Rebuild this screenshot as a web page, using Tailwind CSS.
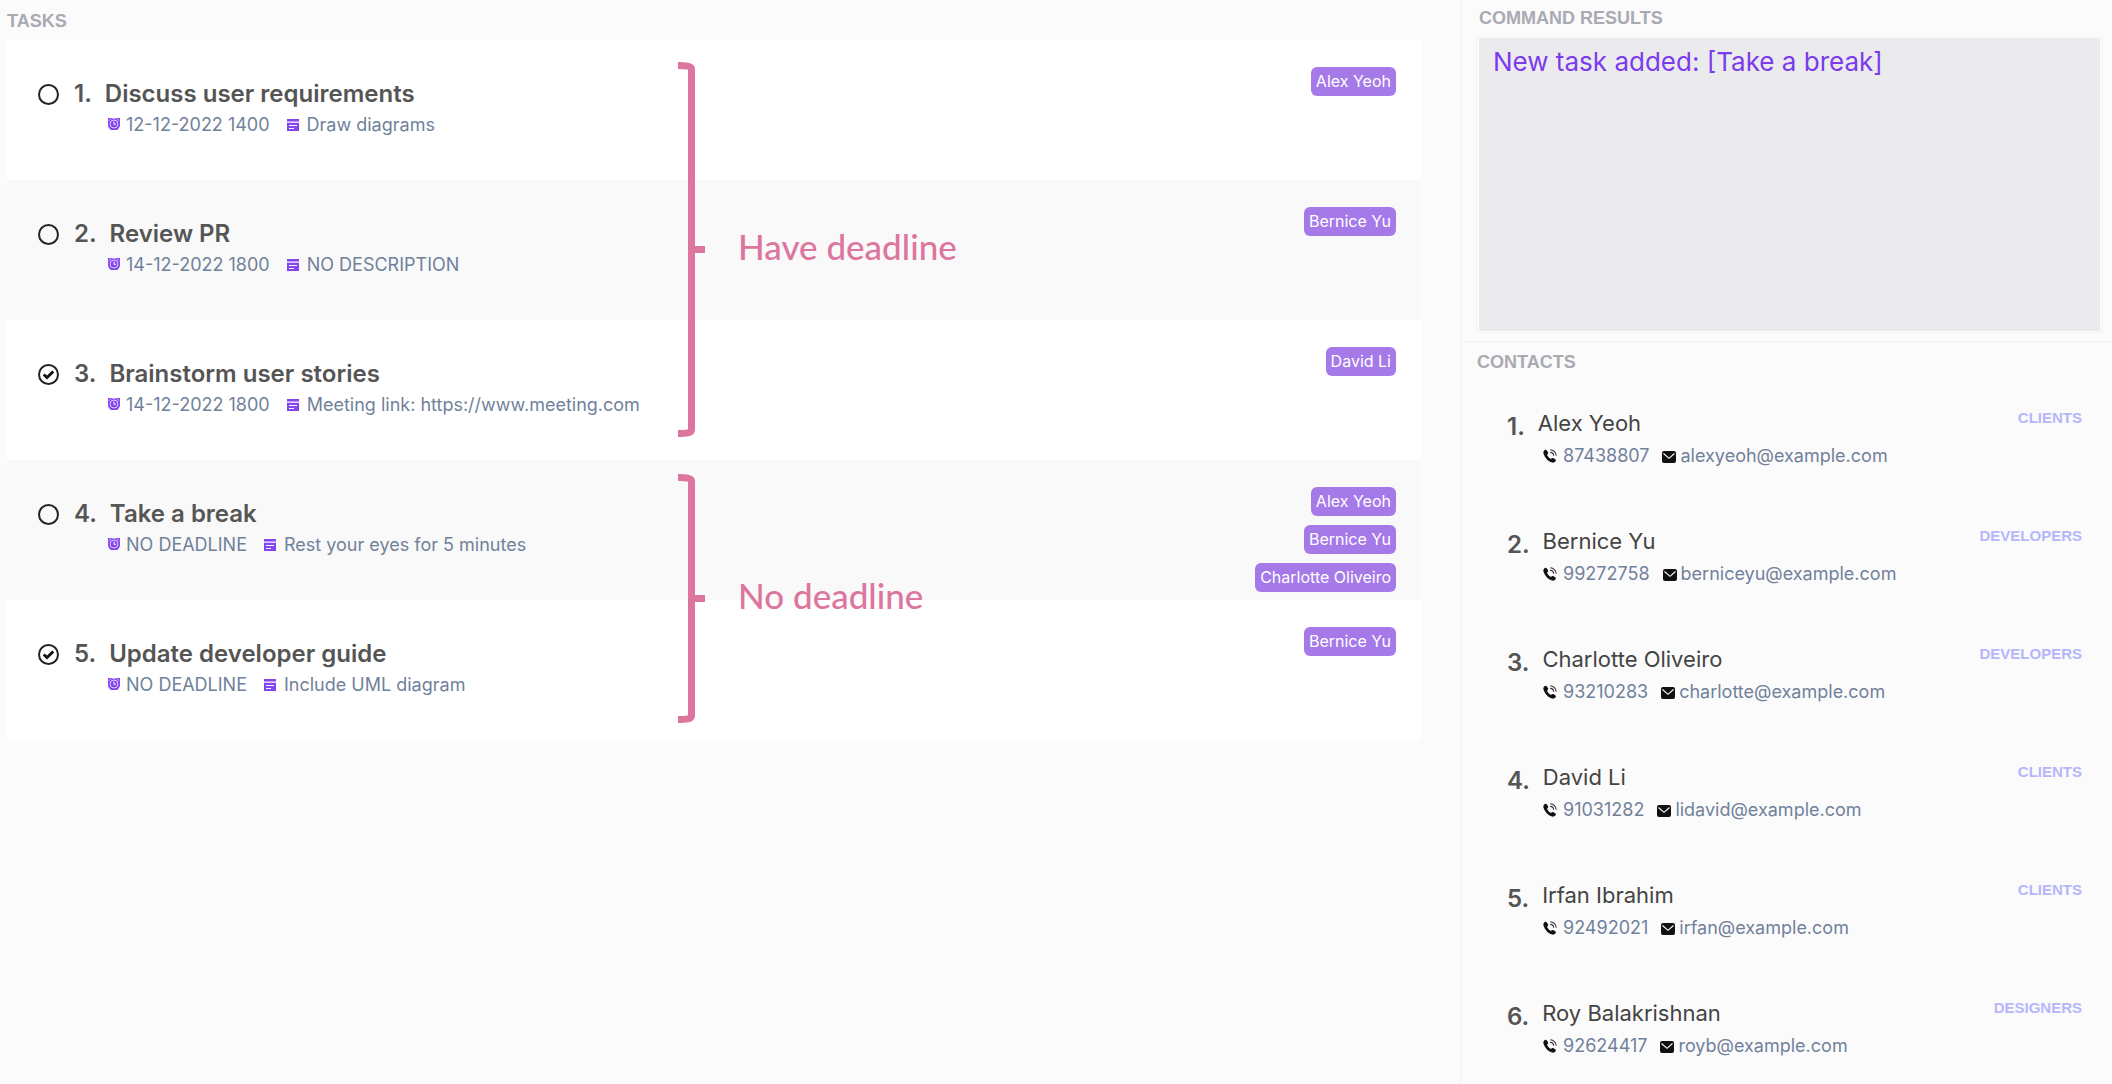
<!DOCTYPE html>
<html lang="en">
<head>
<meta charset="utf-8">
<title>Tasks and contacts</title>
<script src="https://cdn.jsdelivr.net/npm/@tailwindcss/browser@4"></script>
</head>
<body class="bg-[#fbfbfb] font-['Inter',sans-serif]">
<svg class="hidden" aria-hidden="true">
  <symbol id="clock" viewBox="0 0 12 12">
    <path d="M0 0h3l1 .6h4L9 0h3v7A6 5.500 0 0 1 0 7z" fill="#8445f0"/>
    <circle cx="6" cy="6" r="4" fill="none" stroke="#e6dafd" stroke-width=".9"/>
    <path d="M6 3.600v2.700h2.100" fill="none" stroke="#fff" stroke-width="1"/>
    <path d="M.7 2.800l2.200-2M11.300 2.800L9.100.8" stroke="#e6dafd" stroke-width=".8"/>
  </symbol>
  <symbol id="note" viewBox="0 0 12 12">
    <path d="M0 0h12v2.500H0zM0 3.700h12V12H0z" fill="#8445f0"/>
    <path d="M2 6.500h8M2 9.500h5" stroke="#fff" stroke-width="1.200"/>
  </symbol>
  <symbol id="phone" viewBox="0 0 14 14">
    <path d="M1.200 1.400C2.200.5 3.300.6 3.900 1.500l1 1.600c.5.8.3 1.500-.4 2.100-.5.5-.4.9 0 1.600.7 1.100 1.500 2 2.500 2.700.6.4 1 .5 1.500 0 .6-.7 1.300-.8 2.100-.3l1.600 1.100c.8.6.9 1.500.2 2.300-1 1.100-2.400 1.400-4.200.7C4.600 11.900 1.900 8.900.7 5.300.2 3.700.2 2.400 1.200 1.400z" fill="#111"/>
    <path d="M7.200.8c3.300 0 6 2.600 6 6M7.200 3.400c1.900 0 3.400 1.500 3.400 3.400" fill="none" stroke="#333" stroke-width="1.100"/>
  </symbol>
  <symbol id="mail" viewBox="0 0 14 12">
    <rect width="14" height="12" rx="2" fill="#111"/>
    <path d="M1.500 2.500L7 7.300l5.500-4.800" fill="none" stroke="#fff" stroke-width="1.100"/>
  </symbol>
  <symbol id="tick" viewBox="0 0 22 22">
    <path d="M6 11l3.400 3.200L16 7.800" fill="none" stroke="#111" stroke-width="3"/>
  </symbol>
</svg>

<main class="grid h-screen grid-cols-[1462fr_650fr] overflow-hidden">
  <section class="border-r-2 border-[#f5f5f7] pt-2 pr-[38px] pl-[7px]">
    <h2 class="h-8 font-['Liberation_Sans',sans-serif] text-lg leading-[26px] font-bold text-[#aaaab2]">TASKS</h2>
    <div class="relative">
      <ol>
        <li class="flex h-[140px] items-start justify-between bg-white pr-[26px] pl-[31px]">
          <div class="pt-[38px]">
            <div class="flex h-8 items-center text-2xl font-semibold text-[#555]">
              <input id="t1" type="checkbox" class="mr-[15px] size-[21px] appearance-none rounded-full border-2 border-[#222]">
              <label for="t1" class="flex gap-[13px]"><span>1.</span><span>Discuss user requirements</span></label>
            </div>
            <div class="flex h-[30px] items-center pl-[70px] text-lg text-[#71819b]">
              <svg class="mr-[6px] mb-[2px] size-3"><use href="#clock"/></svg><span>12-12-2022 1400</span>
              <svg class="mr-2 ml-[17px] size-3"><use href="#note"/></svg><span>Draw diagrams</span>
            </div>
          </div>
          <div class="flex flex-col items-end gap-[9px] pt-[27px] text-base leading-[29px] text-white">
            <span class="rounded-md bg-[#a57ae8] px-[5px]">Alex Yeoh</span>
          </div>
        </li>
        <li class="flex h-[140px] items-start justify-between bg-[#f9f9f9] pr-[26px] pl-[31px]">
          <div class="pt-[38px]">
            <div class="flex h-8 items-center text-2xl font-semibold text-[#555]">
              <input id="t2" type="checkbox" class="mr-[15px] size-[21px] appearance-none rounded-full border-2 border-[#222]">
              <label for="t2" class="flex gap-[13px]"><span>2.</span><span>Review PR</span></label>
            </div>
            <div class="flex h-[30px] items-center pl-[70px] text-lg text-[#71819b]">
              <svg class="mr-[6px] mb-[2px] size-3"><use href="#clock"/></svg><span>14-12-2022 1800</span>
              <svg class="mr-2 ml-[17px] size-3"><use href="#note"/></svg><span>NO DESCRIPTION</span>
            </div>
          </div>
          <div class="flex flex-col items-end gap-[9px] pt-[27px] text-base leading-[29px] text-white">
            <span class="rounded-md bg-[#a57ae8] px-[5px]">Bernice Yu</span>
          </div>
        </li>
        <li class="flex h-[140px] items-start justify-between bg-white pr-[26px] pl-[31px]">
          <div class="pt-[38px]">
            <div class="flex h-8 items-center text-2xl font-semibold text-[#555]">
              <span class="mr-[15px] grid size-[21px]">
                <input id="t3" type="checkbox" checked class="col-start-1 row-start-1 appearance-none rounded-full border-2 border-[#222]">
                <svg class="pointer-events-none col-start-1 row-start-1 size-[21px]"><use href="#tick"/></svg>
              </span>
              <label for="t3" class="flex gap-[13px]"><span>3.</span><span>Brainstorm user stories</span></label>
            </div>
            <div class="flex h-[30px] items-center pl-[70px] text-lg text-[#71819b]">
              <svg class="mr-[6px] mb-[2px] size-3"><use href="#clock"/></svg><span>14-12-2022 1800</span>
              <svg class="mr-2 ml-[17px] size-3"><use href="#note"/></svg><span>Meeting link: https://www.meeting.com</span>
            </div>
          </div>
          <div class="flex flex-col items-end gap-[9px] pt-[27px] text-base leading-[29px] text-white">
            <span class="rounded-md bg-[#a57ae8] px-[5px]">David Li</span>
          </div>
        </li>
        <li class="flex h-[140px] items-start justify-between bg-[#f9f9f9] pr-[26px] pl-[31px]">
          <div class="pt-[38px]">
            <div class="flex h-8 items-center text-2xl font-semibold text-[#555]">
              <input id="t4" type="checkbox" class="mr-[15px] size-[21px] appearance-none rounded-full border-2 border-[#222]">
              <label for="t4" class="flex gap-[13px]"><span>4.</span><span>Take a break</span></label>
            </div>
            <div class="flex h-[30px] items-center pl-[70px] text-lg text-[#71819b]">
              <svg class="mr-[6px] mb-[2px] size-3"><use href="#clock"/></svg><span>NO DEADLINE</span>
              <svg class="mr-2 ml-[17px] size-3"><use href="#note"/></svg><span>Rest your eyes for 5 minutes</span>
            </div>
          </div>
          <div class="flex flex-col items-end gap-[9px] pt-[27px] text-base leading-[29px] text-white">
            <span class="rounded-md bg-[#a57ae8] px-[5px]">Alex Yeoh</span>
            <span class="rounded-md bg-[#a57ae8] px-[5px]">Bernice Yu</span>
            <span class="rounded-md bg-[#a57ae8] px-[5px]">Charlotte Oliveiro</span>
          </div>
        </li>
        <li class="flex h-[140px] items-start justify-between bg-white pr-[26px] pl-[31px]">
          <div class="pt-[38px]">
            <div class="flex h-8 items-center text-2xl font-semibold text-[#555]">
              <span class="mr-[15px] grid size-[21px]">
                <input id="t5" type="checkbox" checked class="col-start-1 row-start-1 appearance-none rounded-full border-2 border-[#222]">
                <svg class="pointer-events-none col-start-1 row-start-1 size-[21px]"><use href="#tick"/></svg>
              </span>
              <label for="t5" class="flex gap-[13px]"><span>5.</span><span>Update developer guide</span></label>
            </div>
            <div class="flex h-[30px] items-center pl-[70px] text-lg text-[#71819b]">
              <svg class="mr-[6px] mb-[2px] size-3"><use href="#clock"/></svg><span>NO DEADLINE</span>
              <svg class="mr-2 ml-[17px] size-3"><use href="#note"/></svg><span>Include UML diagram</span>
            </div>
          </div>
          <div class="flex flex-col items-end gap-[9px] pt-[27px] text-base leading-[29px] text-white">
            <span class="rounded-md bg-[#a57ae8] px-[5px]">Bernice Yu</span>
          </div>
        </li>
      </ol>

      <!-- Brackets that group the tasks by deadline -->
      <div class="absolute top-[22px] left-[671px] flex items-center gap-[33px] font-['Lato',sans-serif] text-[35px] leading-10 font-medium text-[#dd769e]">
        <svg class="h-[375px] w-[27px]" viewBox="0 0 27 375" fill="none" stroke="currentColor" stroke-width="7"><path d="M0 3.500C8 3.500 13.500 4 13.500 7V368C13.500 371 8 371.500 0 371.500M13.500 187.500H27"/></svg>
        <span class="pb-2">Have deadline</span>
      </div>
      <div class="absolute top-[434px] left-[671px] flex items-center gap-[33px] font-['Lato',sans-serif] text-[35px] leading-10 font-medium text-[#dd769e]">
        <svg class="h-[249px] w-[27px]" viewBox="0 0 27 249" fill="none" stroke="currentColor" stroke-width="7"><path d="M0 3.500C8 3.500 13.500 4 13.500 7V242C13.500 245 8 245.500 0 245.500M13.500 124.500H27"/></svg>
        <span class="pb-2">No deadline</span>
      </div>
    </div>
  </section>

  <div class="flex min-h-0 flex-col">
    <section class="border-b-2 border-[#f5f5f7] pt-[6px] pr-[9px] pb-2 pl-[14px]">
      <h2 class="h-[30px] pl-[3px] font-['Liberation_Sans',sans-serif] text-lg leading-6 font-bold text-[#aaaab2]"><label for="result">COMMAND RESULTS</label></h2>
      <div class="border border-[#f4f4f5] px-[2px] py-px">
        <textarea id="result" readonly class="block h-[293px] w-full resize-none bg-[#ebebed] px-[14px] py-2 text-[26px] leading-8 text-[#7c3aed] outline-none">New task added: [Take a break]</textarea>
      </div>
    </section>

    <section class="min-h-0 pt-2 pl-[15px]">
      <h2 class="font-['Liberation_Sans',sans-serif] text-lg leading-[22px] font-bold text-[#aaaab2]">CONTACTS</h2>
      <ol class="mt-3">
        <li class="flex h-[118px] items-start justify-between pt-[22px] pr-[30px] pl-[30px]">
          <div>
            <div class="flex h-8 items-start gap-[13px] text-[22px] leading-8 text-[#444]"><span class="pt-1 text-2xl leading-8 font-semibold text-[#555]">1.</span><span>Alex Yeoh</span></div>
            <div class="flex h-[34px] items-center pl-9 text-lg text-[#71819b]">
              <svg class="mr-[6px] size-[14px]"><use href="#phone"/></svg><span>87438807</span>
              <svg class="mt-[2px] mr-1 ml-[13px] h-3 w-[14px]"><use href="#mail"/></svg><a href="mailto:alexyeoh@example.com">alexyeoh@example.com</a>
            </div>
          </div>
          <span class="font-['Liberation_Sans',sans-serif] text-[15px] leading-[22px] font-bold text-[#b6b6fb]">CLIENTS</span>
        </li>
        <li class="flex h-[118px] items-start justify-between pt-[22px] pr-[30px] pl-[30px]">
          <div>
            <div class="flex h-8 items-start gap-[13px] text-[22px] leading-8 text-[#444]"><span class="pt-1 text-2xl leading-8 font-semibold text-[#555]">2.</span><span>Bernice Yu</span></div>
            <div class="flex h-[34px] items-center pl-9 text-lg text-[#71819b]">
              <svg class="mr-[6px] size-[14px]"><use href="#phone"/></svg><span>99272758</span>
              <svg class="mt-[2px] mr-1 ml-[13px] h-3 w-[14px]"><use href="#mail"/></svg><a href="mailto:berniceyu@example.com">berniceyu@example.com</a>
            </div>
          </div>
          <span class="font-['Liberation_Sans',sans-serif] text-[15px] leading-[22px] font-bold text-[#b6b6fb]">DEVELOPERS</span>
        </li>
        <li class="flex h-[118px] items-start justify-between pt-[22px] pr-[30px] pl-[30px]">
          <div>
            <div class="flex h-8 items-start gap-[13px] text-[22px] leading-8 text-[#444]"><span class="pt-1 text-2xl leading-8 font-semibold text-[#555]">3.</span><span>Charlotte Oliveiro</span></div>
            <div class="flex h-[34px] items-center pl-9 text-lg text-[#71819b]">
              <svg class="mr-[6px] size-[14px]"><use href="#phone"/></svg><span>93210283</span>
              <svg class="mt-[2px] mr-1 ml-[13px] h-3 w-[14px]"><use href="#mail"/></svg><a href="mailto:charlotte@example.com">charlotte@example.com</a>
            </div>
          </div>
          <span class="font-['Liberation_Sans',sans-serif] text-[15px] leading-[22px] font-bold text-[#b6b6fb]">DEVELOPERS</span>
        </li>
        <li class="flex h-[118px] items-start justify-between pt-[22px] pr-[30px] pl-[30px]">
          <div>
            <div class="flex h-8 items-start gap-[13px] text-[22px] leading-8 text-[#444]"><span class="pt-1 text-2xl leading-8 font-semibold text-[#555]">4.</span><span>David Li</span></div>
            <div class="flex h-[34px] items-center pl-9 text-lg text-[#71819b]">
              <svg class="mr-[6px] size-[14px]"><use href="#phone"/></svg><span>91031282</span>
              <svg class="mt-[2px] mr-1 ml-[13px] h-3 w-[14px]"><use href="#mail"/></svg><a href="mailto:lidavid@example.com">lidavid@example.com</a>
            </div>
          </div>
          <span class="font-['Liberation_Sans',sans-serif] text-[15px] leading-[22px] font-bold text-[#b6b6fb]">CLIENTS</span>
        </li>
        <li class="flex h-[118px] items-start justify-between pt-[22px] pr-[30px] pl-[30px]">
          <div>
            <div class="flex h-8 items-start gap-[13px] text-[22px] leading-8 text-[#444]"><span class="pt-1 text-2xl leading-8 font-semibold text-[#555]">5.</span><span>Irfan Ibrahim</span></div>
            <div class="flex h-[34px] items-center pl-9 text-lg text-[#71819b]">
              <svg class="mr-[6px] size-[14px]"><use href="#phone"/></svg><span>92492021</span>
              <svg class="mt-[2px] mr-1 ml-[13px] h-3 w-[14px]"><use href="#mail"/></svg><a href="mailto:irfan@example.com">irfan@example.com</a>
            </div>
          </div>
          <span class="font-['Liberation_Sans',sans-serif] text-[15px] leading-[22px] font-bold text-[#b6b6fb]">CLIENTS</span>
        </li>
        <li class="flex h-[118px] items-start justify-between pt-[22px] pr-[30px] pl-[30px]">
          <div>
            <div class="flex h-8 items-start gap-[13px] text-[22px] leading-8 text-[#444]"><span class="pt-1 text-2xl leading-8 font-semibold text-[#555]">6.</span><span>Roy Balakrishnan</span></div>
            <div class="flex h-[34px] items-center pl-9 text-lg text-[#71819b]">
              <svg class="mr-[6px] size-[14px]"><use href="#phone"/></svg><span>92624417</span>
              <svg class="mt-[2px] mr-1 ml-[13px] h-3 w-[14px]"><use href="#mail"/></svg><a href="mailto:royb@example.com">royb@example.com</a>
            </div>
          </div>
          <span class="font-['Liberation_Sans',sans-serif] text-[15px] leading-[22px] font-bold text-[#b6b6fb]">DESIGNERS</span>
        </li>
      </ol>
    </section>
  </div>
</main>
</body>
</html>
